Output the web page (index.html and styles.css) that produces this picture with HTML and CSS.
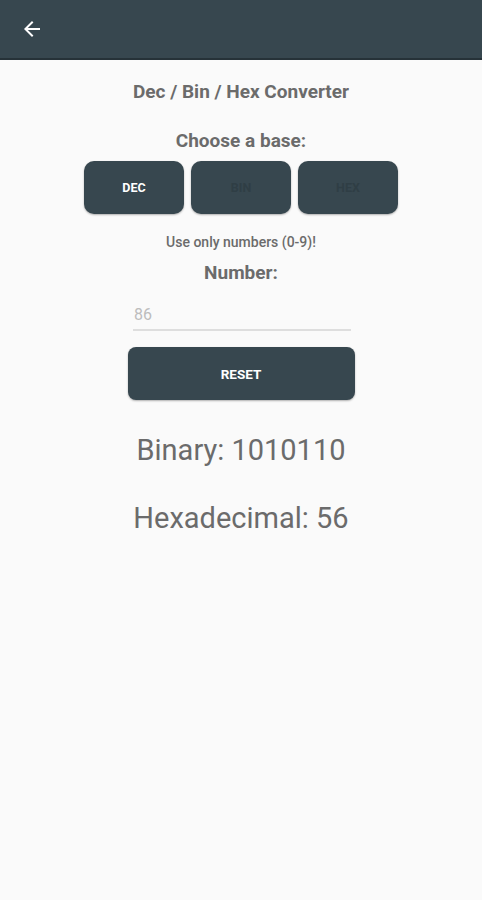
FILE: index.html
```html
<!doctype html>
<html lang="en">
<head>
    <meta charset="utf-8"/>
    <title>Dec / Bin / Hex Converter</title>
    <link rel="stylesheet" href="styles.css">
</head>
<body>

<!--顶部栏-->
<div class="bar">
    <svg class="back" width="24" height="24" viewBox="0 0 24 24">
        <path d="M20 11H7.83l5.59-5.59L12 4l-8 8 8 8 1.41-1.41L7.83 13H20v-2z" fill="#fff"/>
    </svg>
</div>

<div class="main">
    <h1 class="title">Dec / Bin / Hex Converter</h1>
    <h2 class="label">Choose a base:</h2>
    <div class="bases">
        <span class="base on">DEC</span>
        <span class="base">BIN</span>
        <span class="base">HEX</span>
    </div>
    <p class="hint">Use only numbers (0-9)!</p>
    <h2 class="label num">Number:</h2>
    <div class="field"><span>86</span></div>
    <div class="reset">RESET</div>
    <p class="result">Binary: 1010110</p>
    <p class="result">Hexadecimal: 56</p>
</div>

</body>
</html>
```

FILE: styles.css
```css
* {
    padding: 0;
    margin: 0;
    border: 0;
}
body {
    background: #fafafa;
    font-family: Roboto, "Liberation Sans", sans-serif;
    color: #6b6b6b;
}
.bar {
    height: 58px;
    background: #37474f;
    border-bottom: 2px solid #263238;
    display: flex;
    align-items: center;
    padding-left: 20px;
}
.main {
    display: flex;
    flex-direction: column;
    align-items: center;
}
.title {
    margin-top: 21px;
    font-size: 19px;
    font-weight: bold;
    line-height: 22px;
}
.label {
    margin-top: 27px;
    font-size: 19px;
    font-weight: bold;
    line-height: 22px;
}
.bases {
    display: flex;
    gap: 7px;
    margin-top: 9px;
}
.base {
    width: 100px;
    height: 53px;
    border-radius: 10px;
    background: #37474f;
    color: #2f3e45;
    font-size: 12.5px;
    font-weight: bold;
    display: flex;
    align-items: center;
    justify-content: center;
    box-shadow: 0 1px 2px rgba(0, 0, 0, 0.3);
}
.base.on {
    color: #fff;
}
.hint {
    margin-top: 20px;
    font-size: 14px;
    font-weight: 500;
    line-height: 16px;
}
.label.num {
    margin-top: 12px;
}
.field {
    width: 218px;
    margin-top: 22px;
    margin-left: 2px;
    padding-bottom: 5px;
    border-bottom: 2px solid #dedede;
    font-size: 16px;
    line-height: 18px;
    color: #bdbdbd;
}
.field span {
    padding-left: 1px;
}
.reset {
    width: 227px;
    height: 53px;
    margin-top: 16px;
    border-radius: 8px;
    background: #37474f;
    color: #fff;
    font-size: 13.5px;
    font-weight: bold;
    display: flex;
    align-items: center;
    justify-content: center;
    box-shadow: 0 1px 2px rgba(0, 0, 0, 0.3);
}
.result {
    font-size: 29px;
    line-height: 34px;
    margin-top: 33px;
}
.result + .result {
    margin-top: 34px;
}
```
